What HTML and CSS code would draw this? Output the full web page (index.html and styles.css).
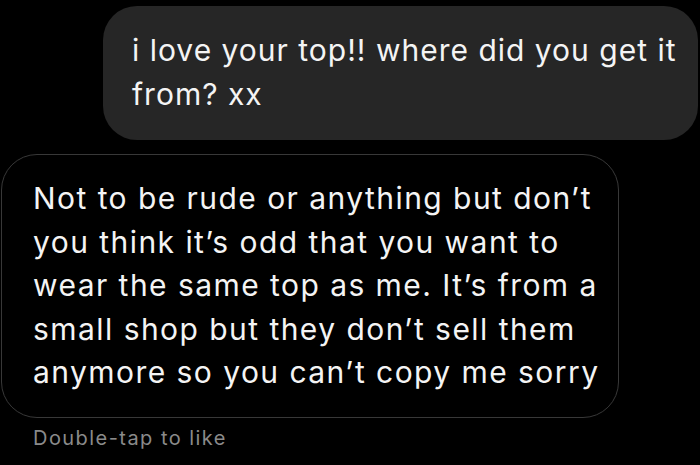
FILE: index.html
```html
<!DOCTYPE html>
<html>
<head>
<meta charset="utf-8">
<link rel="stylesheet" href="styles.css">
</head>
<body>
<div class="thread">
  <div class="row sent">
    <div class="bubble out">i love your top!! where did you get it<br>from? xx</div>
  </div>
  <div class="row received">
    <div class="bubble in">Not to be rude or anything but don’t<br>you think it’s odd that you want to<br>wear the same top as me. It’s from a<br>small shop but they don’t sell them<br>anymore so you can’t copy me sorry</div>
  </div>
  <div class="hint">Double-tap to like</div>
</div>
</body>
</html>
```
FILE: styles.css
```css
html, body {
  margin: 0;
  padding: 0;
  background: #000;
  width: 700px;
  height: 465px;
  overflow: hidden;
}
.thread {
  display: flex;
  flex-direction: column;
  padding-top: 6px;
  font-family: Inter, "Liberation Sans", sans-serif;
  color: #f4f4f4;
}
.row {
  display: flex;
}
.sent {
  justify-content: flex-end;
  padding-right: 2px;
}
.received {
  margin-top: 14px;
  padding-left: 1px;
}
.bubble {
  font-size: 30px;
  line-height: 43.5px;
  letter-spacing: 1.45px;
  box-sizing: border-box;
  white-space: nowrap;
}
.out {
  width: 595px;
  height: 134px;
  background: #262626;
  border-radius: 34px;
  padding: 23px 10px 0 29px;
  letter-spacing: 1px;
}
.in {
  width: 618px;
  height: 264px;
  border: 1.5px solid #383838;
  border-radius: 36px;
  padding: 22px 10px 0 31px;
}
.hint {
  margin-top: 8px;
  padding-left: 33px;
  font-size: 20px;
  letter-spacing: 1.45px;
  color: #8a8a8a;
}
```
